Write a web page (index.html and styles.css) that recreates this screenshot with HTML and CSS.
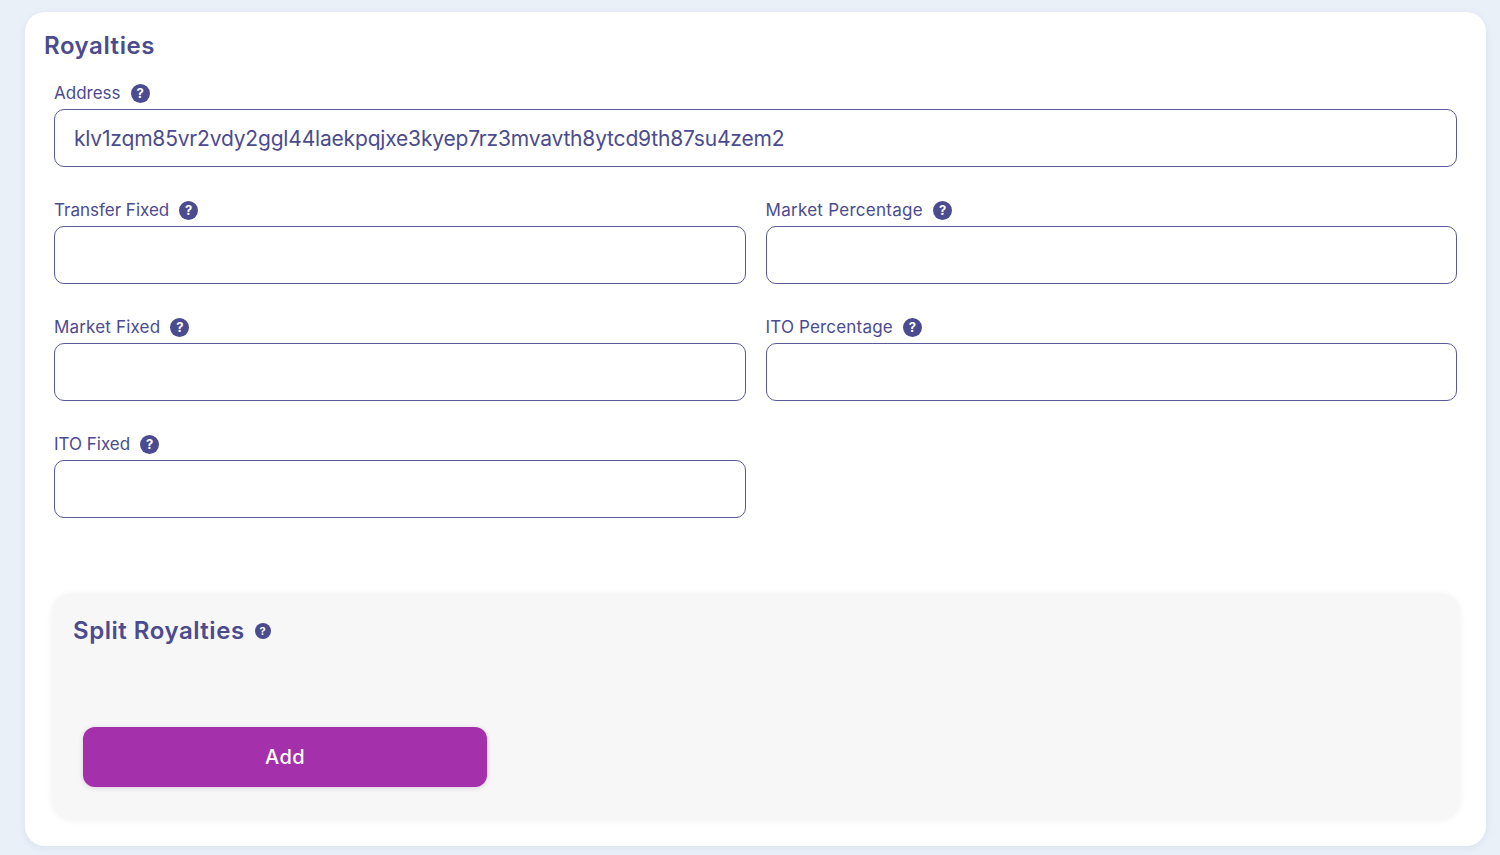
FILE: index.html
```html
<!DOCTYPE html>
<html lang="en">
<head>
<meta charset="utf-8">
<title>Royalties</title>
<link rel="stylesheet" href="styles.css">
</head>
<body>
<main class="card">
  <h2 class="title">Royalties</h2>
  <div class="field">
    <label class="label label-tight">Address <span class="help">?</span></label>
    <input class="input" type="text" value="klv1zqm85vr2vdy2ggl44laekpqjxe3kyep7rz3mvavth8ytcd9th87su4zem2">
  </div>
  <div class="grid">
    <div class="field"><label class="label label-tight">Transfer Fixed <span class="help">?</span></label><input class="input" type="text"></div>
    <div class="field"><label class="label label-wide">Market Percentage <span class="help">?</span></label><input class="input" type="text"></div>
    <div class="field"><label class="label">Market Fixed <span class="help">?</span></label><input class="input" type="text"></div>
    <div class="field"><label class="label">ITO Percentage <span class="help">?</span></label><input class="input" type="text"></div>
    <div class="field"><label class="label label-tight">ITO Fixed <span class="help">?</span></label><input class="input" type="text"></div>
  </div>
  <section class="panel">
    <h3 class="panel-title">Split Royalties <span class="help help-small">?</span></h3>
    <button class="add" type="button">Add</button>
  </section>
</main>
</body>
</html>
```
FILE: styles.css
```css
* { box-sizing: border-box; }
html, body { height: 100%; }
body {
  margin: 0;
  padding: 12px 14px 9px 25px;
  background: #e9f0f8;
  font-family: "Inter", "Noto Sans", sans-serif;
  color: #4b4b8f;
  overflow: hidden;
}
.card {
  height: 834px;
  background: #fff;
  border-radius: 20px;
  box-shadow: 0 2px 8px rgba(120, 130, 170, 0.12);
  padding: 19px 29px 0 19px;
}
.title {
  margin: 0 0 22px;
  height: 30px;
  font-size: 24px;
  line-height: 30px;
  font-weight: 600;
  letter-spacing: 0.55px;
}
.field {
  display: flex;
  flex-direction: column;
  padding-left: 10px;
  gap: 6px;
}
.label {
  display: flex;
  align-items: center;
  gap: 10px;
  height: 20px;
  font-size: 17px;
  line-height: 20px;
  font-weight: 400;
  letter-spacing: 0.18px;
}
.label-tight { letter-spacing: 0; }
.label-wide { letter-spacing: 0.28px; }
.help {
  display: inline-flex;
  align-items: center;
  justify-content: center;
  width: 19px;
  height: 19px;
  border-radius: 50%;
  background: #4b4b8f;
  color: #fff;
  font-size: 13px;
  font-weight: 700;
  letter-spacing: 0;
}
.input {
  width: 100%;
  height: 58px;
  padding: 0 19px;
  border: 1px solid #5a5a98;
  border-radius: 10px;
  background: #fff;
  color: #4b4b8f;
  font: 400 21px "Inter", "Noto Sans", sans-serif;
  letter-spacing: -0.18px;
  outline: none;
}
.grid {
  display: grid;
  grid-template-columns: 701.5px 701.5px;
  column-gap: 10px;
  row-gap: 33px;
  margin-top: 33px;
}
.panel {
  margin: 76px -3px 0 8px;
  height: 226px;
  padding: 22px 21px 0 21px;
  background: #f7f7f7;
  border-radius: 20px;
  box-shadow: 0 0 6px rgba(230, 230, 235, 0.6);
}
.panel-title {
  display: flex;
  align-items: center;
  gap: 10px;
  margin: 0;
  height: 30px;
  font-size: 24px;
  line-height: 30px;
  font-weight: 600;
  letter-spacing: 0.53px;
}
.help-small {
  width: 16px;
  height: 16px;
  font-size: 11px;
}
.add {
  display: block;
  width: 404px;
  height: 60px;
  margin: 81px 0 0 10px;
  border: 0;
  border-radius: 12px;
  background: #a530ab;
  color: #fff;
  font: 500 20px "Inter", "Noto Sans", sans-serif;
  letter-spacing: 0.5px;
  box-shadow: 0 1px 5px rgba(100, 60, 110, 0.2);
}
```
